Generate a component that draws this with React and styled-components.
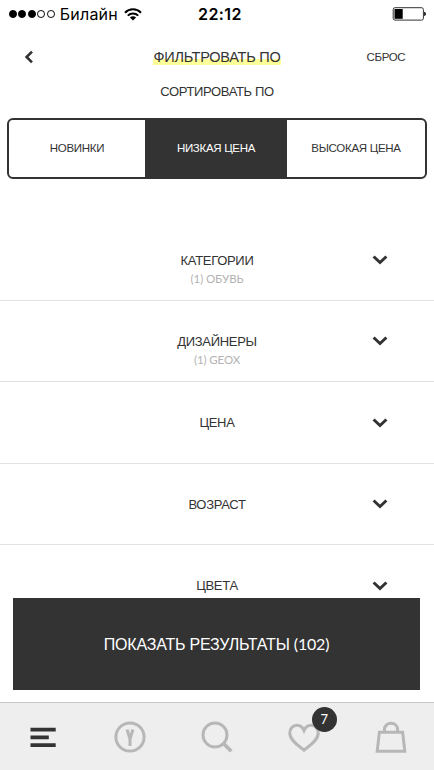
import React from 'react'
import styled, { createGlobalStyle } from 'styled-components'

const GlobalStyle = createGlobalStyle`
    * {
        box-sizing: border-box;
    }
    body {
        margin: 0;
        background-color: #ffffff;
        font-family: 'Liberation Sans', Arial, sans-serif;
        color: #333333;
    }
    button {
        font-family: inherit;
        color: inherit;
        border: none;
        background: none;
        padding: 0;
        cursor: pointer;
    }
`

const Screen = styled.div`
    width: 434px;
    height: 770px;
    display: flex;
    flex-direction: column;
    overflow: hidden;
    background-color: #ffffff;
    white-space: nowrap;
`

const StatusBar = styled.div`
    height: 28px;
    display: grid;
    grid-template-columns: 1fr 60px 1fr;
    align-items: center;
    padding: 0 8px 0 9px;
    font-family: Inter, sans-serif;
    color: #000000;
`

const Carrier = styled.div`
    display: flex;
    align-items: center;
    font-size: 16px;
    letter-spacing: 0.22px;
`

const Signal = styled.div`
    display: flex;
    gap: 1.7px;
    margin-right: 5px;
`

const Dot = styled.span`
    width: 7.8px;
    height: 7.8px;
    border-radius: 50%;
    border: 1px solid #000000;
    background-color: ${({ $filled }) => ($filled ? '#000000' : 'transparent')};
`

const Wifi = styled.svg`
    margin-left: 6px;
`

const Time = styled.div`
    padding-left: 5px;
    text-align: center;
    font-size: 16px;
    font-weight: 600;
    letter-spacing: 0.4px;
`

const Battery = styled.svg`
    justify-self: end;
`

const Header = styled.header`
    height: 56px;
    display: grid;
    grid-template-columns: 110px 1fr 110px;
    align-items: center;
    padding-top: 1px;
`

const BackButton = styled.button`
    height: 24px;
    padding-left: 24px;
    display: flex;
    align-items: center;
`

const Title = styled.h1`
    justify-self: center;
    margin: 0;
    padding-top: 2px;
    font-size: 14.5px;
    font-weight: 400;
    line-height: 15px;
    letter-spacing: -0.23px;
    background: linear-gradient(transparent 62%, #ffff99 62%);
`

const ResetButton = styled.button`
    justify-self: start;
    padding-left: 42.5px;
    font-size: 11.5px;
    letter-spacing: -0.35px;
`

const SortTitle = styled.h2`
    height: 34px;
    margin: 0;
    font-size: 13px;
    font-weight: 400;
    line-height: 16px;
    letter-spacing: -0.35px;
    text-align: center;
`

const Segments = styled.div`
    height: 61px;
    flex-shrink: 0;
    margin: 0 7px 40.4px;
    display: grid;
    grid-template-columns: 136px 142px 1fr;
    border: 2px solid #333333;
    border-radius: 6px;
    overflow: hidden;
`

const Segment = styled.button`
    padding-bottom: 2px;
    font-size: 11.5px;
    letter-spacing: -0.3px;
    ${({ $active }) => $active && `
        background-color: #333333;
        color: #ffffff;
    `}
`

const Filters = styled.div`
    flex: 1;
    min-height: 0;
    overflow: hidden;
`

const Row = styled.div`
    height: 81.4px;
    padding-top: 32.2px;
    display: grid;
    grid-template-columns: 110px 1fr 110px;
    align-items: start;
    border-bottom: 1px solid #e2e2e2;
    cursor: pointer;
`

const RowText = styled.div`
    grid-column: 2;
    text-align: center;
`

const RowLabel = styled.div`
    font-size: 13px;
    line-height: 18px;
    letter-spacing: -0.3px;
`

const RowValue = styled.div`
    font-family: Lato, sans-serif;
    font-size: 11.5px;
    line-height: 18px;
    letter-spacing: -0.1px;
    color: #b3b3b3;
`

const Chevron = styled.svg`
    margin: 3.5px 0 0 47.5px;
`

const ResultsButton = styled.button`
    height: 92px;
    flex-shrink: 0;
    margin: 0 14px 12px 13px;
    background-color: #333333;
    color: #ffffff;
    font-size: 16px;
    letter-spacing: -0.2px;
`

const Count = styled.span`
    font-family: Lato, sans-serif;
`

const TabBar = styled.nav`
    height: 68px;
    flex-shrink: 0;
    display: grid;
    grid-template-columns: repeat(5, 1fr);
    align-items: center;
    justify-items: center;
    background-color: #eeeeee;
    border-top: 1px solid #c5c8c8;
`

const Tab = styled.button`
    position: relative;
    width: 34px;
    height: 34px;
    color: ${({ $active }) => ($active ? '#333333' : '#b7b7b7')};
`

const TabIcon = styled.svg`
    display: block;
`

const Badge = styled.span`
    position: absolute;
    top: -13px;
    right: -16px;
    width: 25px;
    height: 25px;
    border-radius: 50%;
    background-color: #333333;
    color: #ffffff;
    font-family: Lato, sans-serif;
    font-size: 13px;
    line-height: 25px;
    text-align: center;
`

const segments = ['НОВИНКИ', 'НИЗКАЯ ЦЕНА', 'ВЫСОКАЯ ЦЕНА']

const filters = [
    { label: 'КАТЕГОРИИ', value: '(1) ОБУВЬ' },
    { label: 'ДИЗАЙНЕРЫ', value: '(1) GEOX' },
    { label: 'ЦЕНА' },
    { label: 'ВОЗРАСТ' },
    { label: 'ЦВЕТА' },
]

const tabs = [
    {
        name: 'menu',
        icon: <path d="M4.5 9.6H29.7M4.5 17.3H22.8M4.5 25.1H29.7" strokeWidth="3.8" />,
    },
    {
        name: 'brand',
        icon: (
            <>
                <circle cx="17" cy="17" r="14.1" />
                <path d="M14.1 9.5L17 19L19.9 9.5M17 18V26" strokeWidth="3" />
            </>
        ),
    },
    {
        name: 'search',
        icon: (
            <>
                <circle cx="15" cy="15" r="12" />
                <path d="M23.4 23.4L31.3 31.3" strokeWidth="3.7" />
            </>
        ),
    },
    {
        name: 'favourites',
        icon: <path d="M17 30.2C12.5 26.2 2.8 20.8 2.8 13C2.8 8.4 6 5.2 9.8 5.2C13 5.2 15.6 7 17 10.4C18.4 7 21 5.2 24.2 5.2C28 5.2 31.2 8.4 31.2 13C31.2 20.8 21.5 26.2 17 30.2Z" />,
        badge: 7,
    },
    {
        name: 'bag',
        icon: (
            <>
                <path d="M5.4 12.2H28.6L30.8 31.2H3.2Z" />
                <path d="M10.4 12V9.8C10.4 5.9 13.3 3.3 17 3.3C20.7 3.3 23.6 5.9 23.6 9.8V12" />
            </>
        ),
    },
]

const App = () => {
    const [sort, setSort] = React.useState(1)
    const [tab, setTab] = React.useState(0)

    return (
        <Screen>
            <GlobalStyle />
            <StatusBar>
                <Carrier>
                    <Signal>
                        {[1, 1, 1, 0, 0].map((filled, index) => (
                            <Dot key={index} $filled={filled} />
                        ))}
                    </Signal>
                    Билайн
                    <Wifi width="18" height="13" viewBox="0 0 18 13" fill="none" stroke="#000000" strokeWidth="2">
                        <path d="M1 4.7C5.4 0.2 12.6 0.2 17 4.7" />
                        <path d="M3.8 7.6C6.7 4.7 11.3 4.7 14.2 7.6" />
                        <path d="M9 12.6L5.9 9.5C7.6 7.9 10.4 7.9 12.1 9.5Z" fill="#000000" stroke="none" />
                    </Wifi>
                </Carrier>
                <Time>22:12</Time>
                <Battery width="34" height="14" viewBox="0 0 34 14">
                    <rect x="1.2" y="0.7" width="30.2" height="12.4" rx="1.8" fill="none" stroke="#333333" />
                    <rect x="2.5" y="2" width="8.2" height="9.8" fill="#000000" />
                    <path d="M32.2 4.8C34.4 5.2 34.4 8.6 32.2 9Z" fill="#000000" />
                </Battery>
            </StatusBar>
            <Header>
                <BackButton aria-label="back">
                    <svg width="10" height="14" viewBox="0 0 10 14" fill="none" stroke="#333333" strokeWidth="2.6">
                        <path d="M8 1.6L2.6 7L8 12.4" />
                    </svg>
                </BackButton>
                <Title>ФИЛЬТРОВАТЬ ПО</Title>
                <ResetButton>СБРОС</ResetButton>
            </Header>
            <SortTitle>СОРТИРОВАТЬ ПО</SortTitle>
            <Segments>
                {segments.map((label, index) => (
                    <Segment key={label} $active={index === sort} onClick={() => setSort(index)}>
                        {label}
                    </Segment>
                ))}
            </Segments>
            <Filters>
                {filters.map((filter) => (
                    <Row key={filter.label}>
                        <RowText>
                            <RowLabel>{filter.label}</RowLabel>
                            {filter.value && <RowValue>{filter.value}</RowValue>}
                        </RowText>
                        <Chevron width="16" height="10" viewBox="0 0 16 10" fill="none" stroke="#333333" strokeWidth="3">
                            <path d="M1.6 1.5L8 7.5L14.4 1.5" />
                        </Chevron>
                    </Row>
                ))}
            </Filters>
            <ResultsButton>
                ПОКАЗАТЬ РЕЗУЛЬТАТЫ <Count>(102)</Count>
            </ResultsButton>
            <TabBar>
                {tabs.map((item, index) => (
                    <Tab key={item.name} aria-label={item.name} $active={index === tab} onClick={() => setTab(index)}>
                        <TabIcon width="34" height="34" viewBox="0 0 34 34" fill="none" stroke="currentColor" strokeWidth="3">
                            {item.icon}
                        </TabIcon>
                        {item.badge && <Badge>{item.badge}</Badge>}
                    </Tab>
                ))}
            </TabBar>
        </Screen>
    )
}

export default App
